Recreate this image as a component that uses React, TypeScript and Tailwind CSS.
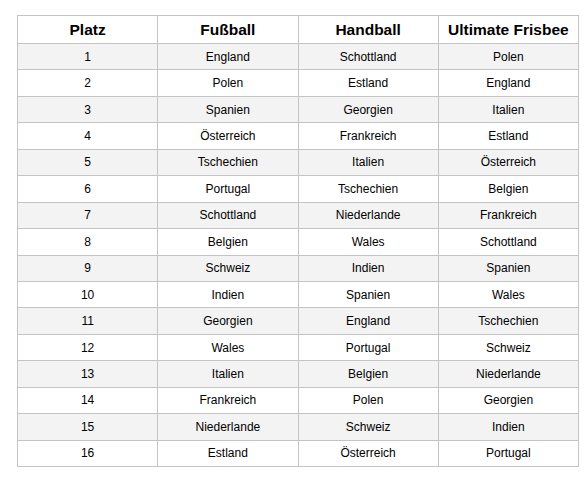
import React from 'react';

const rows: [string, string, string][] = [
  ['England', 'Schottland', 'Polen'],
  ['Polen', 'Estland', 'England'],
  ['Spanien', 'Georgien', 'Italien'],
  ['Österreich', 'Frankreich', 'Estland'],
  ['Tschechien', 'Italien', 'Österreich'],
  ['Portugal', 'Tschechien', 'Belgien'],
  ['Schottland', 'Niederlande', 'Frankreich'],
  ['Belgien', 'Wales', 'Schottland'],
  ['Schweiz', 'Indien', 'Spanien'],
  ['Indien', 'Spanien', 'Wales'],
  ['Georgien', 'England', 'Tschechien'],
  ['Wales', 'Portugal', 'Schweiz'],
  ['Italien', 'Belgien', 'Niederlande'],
  ['Frankreich', 'Polen', 'Georgien'],
  ['Niederlande', 'Schweiz', 'Indien'],
  ['Estland', 'Österreich', 'Portugal'],
];

const headers = ['Platz', 'Fußball', 'Handball', 'Ultimate Frisbee'];

const App: React.FC = () => {
  return (
    <div className="min-h-screen bg-white pt-[15px] pl-[17px] font-['Liberation_Sans',Arial,sans-serif] text-black">
      <table className="w-[562px] table-fixed border-collapse border border-[#bdbdbd]">
        <thead>
          <tr className="h-[28px]">
            {headers.map((h) => (
              <th key={h} className="border border-[#c4c4c4] p-0 text-center text-[15.5px] font-bold">
                {h}
              </th>
            ))}
          </tr>
        </thead>
        <tbody>
          {rows.map((r, i) => (
            <tr key={i} className={`h-[26.44px] ${i % 2 === 0 ? 'bg-[#f3f3f3]' : 'bg-white'}`}>
              <td className="border border-[#c4c4c4] p-0 text-center text-[12px]">{i + 1}</td>
              {r.map((c, j) => (
                <td key={j} className="border border-[#c4c4c4] p-0 text-center text-[12px]">
                  {c}
                </td>
              ))}
            </tr>
          ))}
        </tbody>
      </table>
    </div>
  );
};

export default App;
